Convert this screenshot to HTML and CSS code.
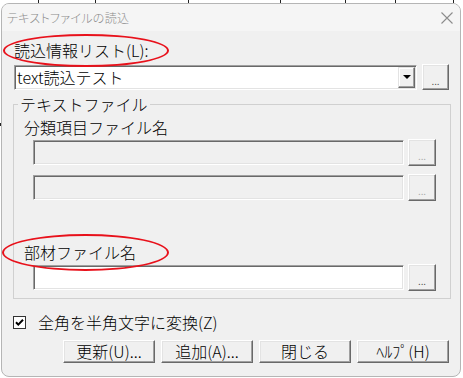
FILE: index.html
```html
<!DOCTYPE html>
<html lang="ja">

<head>
    <meta charset="UTF-8">
    <meta name="viewport" content="width=device-width, initial-scale=1.0">
    <title>テキストファイルの読込</title>
    <link rel="stylesheet" href="styles.css">
</head>

<body>
    <div class="window">
        <div class="titlebar">
            <span class="title">テキストファイルの読込</span>
            <svg class="close" width="12" height="12" viewBox="0 0 12 12">
                <path d="M0.5 0.5 L11.5 11.5 M11.5 0.5 L0.5 11.5" stroke="#8c8c8c" stroke-width="1.1" fill="none" />
            </svg>
        </div>
        <div class="content">
            <div class="label first">読込情報リスト(L):</div>
            <div class="combo-row">
                <div class="combo">
                    <span class="combo-text">text読込テスト</span>
                    <div class="drop"><span class="arrow"></span></div>
                </div>
                <button class="browse big">...</button>
            </div>

            <fieldset class="group">
                <legend>テキストファイル</legend>
                <div class="label">分類項目ファイル名</div>
                <div class="field-row">
                    <div class="field disabled"></div>
                    <button class="browse" disabled>...</button>
                </div>
                <div class="field-row second">
                    <div class="field disabled"></div>
                    <button class="browse" disabled>...</button>
                </div>
                <div class="label parts">部材ファイル名</div>
                <div class="field-row">
                    <div class="field"></div>
                    <button class="browse">...</button>
                </div>
            </fieldset>

            <label class="check">
                <svg class="box" width="13" height="13" viewBox="0 0 13 13">
                    <rect x="0.5" y="0.5" width="12" height="12" fill="#ffffff" stroke="#333333" />
                    <path d="M3 6.2 L5.3 8.6 L10 3.8" stroke="#000000" stroke-width="2" fill="none" />
                </svg>
                全角を半角文字に変換(Z)
            </label>

            <div class="actions">
                <button class="btn">更新(U)...</button>
                <button class="btn">追加(A)...</button>
                <button class="btn">閉じる</button>
                <button class="btn">ﾍﾙﾌﾟ(H)</button>
            </div>
        </div>

        <div class="mark mark-list"></div>
        <div class="mark mark-parts"></div>
    </div>
</body>

</html>
```

FILE: styles.css
```css
* {
    box-sizing: border-box;
}

body {
    margin: 0;
    min-height: 378px;
    background-color: #ffffff;
    background-image:
        linear-gradient(#222, #222), linear-gradient(#222, #222), linear-gradient(#222, #222),
        linear-gradient(#222, #222), linear-gradient(#222, #222), linear-gradient(#222, #222),
        linear-gradient(#222, #222), linear-gradient(#222, #222);
    background-repeat: no-repeat;
    background-size: 1px 3px, 1px 3px, 1px 3px, 1px 3px, 1px 3px, 1px 3px, 1px 3px, 1px 3px;
    background-position: 38px 0, 95px 0, 188px 0, 280px 0, 345px 0, 395px 0, 453px 0, 0 123px;
    font-family: "Noto Sans CJK JP", "Noto Sans", sans-serif;
    font-weight: 300;
    font-size: 16px;
    color: #000000;
}

.window {
    position: relative;
    width: 460px;
    height: 374px;
    margin: 3px 0 0 1px;
    background-color: #f0f0f0;
    border: 1px solid #b5b5b5;
    border-radius: 8px;
    overflow: hidden;
}

.titlebar {
    height: 27px;
    display: flex;
    align-items: center;
    justify-content: space-between;
    padding: 0 7px 0 5px;
    background-color: #f5f5f5;
}

.title {
    font-size: 12px;
    color: #8c8c8c;
    font-feature-settings: "palt";
    letter-spacing: 0.3px;
}

.content {
    padding: 9px 0 0 12px;
}

.label {
    line-height: 20px;
}

.combo-row {
    margin-top: 4px;
    display: flex;
    align-items: center;
    gap: 5px;
}

.combo {
    width: 403px;
    height: 25px;
    display: flex;
    align-items: stretch;
    justify-content: space-between;
    background-color: #ffffff;
    border: 1px solid;
    border-color: #a0a0a0 #ffffff #ffffff #a0a0a0;
    box-shadow: inset 1px 1px #696969, inset -1px -1px #e3e3e3;
    padding: 1px;
}

.combo-text {
    padding-left: 1px;
    line-height: 21px;
}

.drop {
    width: 17px;
    display: grid;
    place-content: center;
    background-color: #f0f0f0;
    border: 1px solid;
    border-color: #e3e3e3 #696969 #696969 #e3e3e3;
    box-shadow: inset -1px -1px #a0a0a0, inset 1px 1px #ffffff;
}

.arrow {
    width: 0;
    height: 0;
    border-left: 4px solid transparent;
    border-right: 4px solid transparent;
    border-top: 4px solid #000000;
}

button {
    font-family: inherit;
    font-weight: inherit;
    color: #000000;
    background-color: #f0f0f0;
    padding: 0;
    margin: 0;
    border: 1px solid;
    border-color: #ffffff #696969 #696969 #ffffff;
    box-shadow: inset -1px -1px #a0a0a0, inset 1px 1px #e3e3e3;
    border-radius: 0;
}

.browse {
    width: 28px;
    height: 27px;
    font-size: 11px;
    line-height: 1;
    padding-top: 6px;
    color: #505050;
}

.browse.big {
    width: 27px;
    height: 26px;
}

.browse:disabled {
    color: #a8a8a8;
}

.group {
    margin: 5px 0 0 -1px;
    width: 438px;
    padding: 0 14px 7px 10px;
    border: 1px solid #d0d0d0;
}

.group legend {
    margin-left: -6px;
    padding: 0 2px;
    line-height: 18px;
}

.group .label {
    margin-top: 4px;
}

.group .label.parts {
    margin-top: 41px;
}

.field-row {
    margin: 2px 0 0 9px;
    display: flex;
    align-items: flex-start;
    gap: 4px;
}

.field-row.second {
    margin-top: 8px;
}

.field {
    width: 371px;
    height: 25px;
    margin-top: 1px;
    background-color: #ffffff;
    border: 1px solid;
    border-color: #a0a0a0 #ffffff #ffffff #a0a0a0;
    box-shadow: inset 1px 1px #696969, inset -1px -1px #e3e3e3;
}

.field.disabled {
    background-color: #f0f0f0;
}

.check {
    margin: 13px 0 0 -1px;
    display: flex;
    align-items: center;
    gap: 12px;
    line-height: 20px;
}

.actions {
    margin: 8px 0 0 49px;
    display: flex;
    gap: 6px;
}

.btn {
    width: 92px;
    height: 23px;
    font-size: 16px;
    line-height: 21px;
}

.mark {
    position: absolute;
    border: 2px solid #e8111b;
    border-radius: 50%;
}

.mark-list {
    left: 1px;
    top: 30px;
    width: 166px;
    height: 33px;
}

.mark-parts {
    left: 0;
    top: 230px;
    width: 167px;
    height: 37px;
}
```
